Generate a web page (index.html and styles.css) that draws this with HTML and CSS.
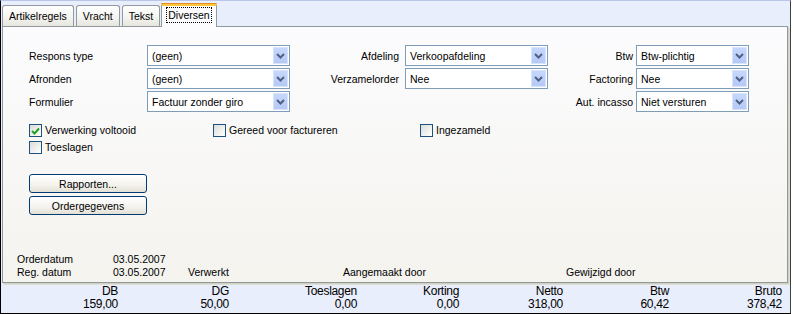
FILE: index.html
```html
<!DOCTYPE html>
<html lang="nl">
<head>
    <meta charset="UTF-8">
    <title>Order - Diversen</title>
    <link rel="stylesheet" href="styles.css">
</head>
<body>
    <div class="window">
        <div class="tabs">
            <div class="tab">Artikelregels</div>
            <div class="tab">Vracht</div>
            <div class="tab">Tekst</div>
            <div class="tab active"><span class="focus">Diversen</span></div>
        </div>

        <div class="panel">
            <!-- Keuzelijsten -->
            <div class="fields">
                <span class="lbl">Respons type</span>
                <div class="combo"><span>(geen)</span><i class="drop"><svg width="9" height="6" viewBox="0 0 9 6"><polyline points="1,1 4.5,4.5 8,1" fill="none" stroke="#4d6185" stroke-width="2"/></svg></i></div>
                <span class="lbl right">Afdeling</span>
                <div class="combo"><span>Verkoopafdeling</span><i class="drop"><svg width="9" height="6" viewBox="0 0 9 6"><polyline points="1,1 4.5,4.5 8,1" fill="none" stroke="#4d6185" stroke-width="2"/></svg></i></div>
                <span class="lbl right tight">Btw</span>
                <div class="combo"><span>Btw-plichtig</span><i class="drop"><svg width="9" height="6" viewBox="0 0 9 6"><polyline points="1,1 4.5,4.5 8,1" fill="none" stroke="#4d6185" stroke-width="2"/></svg></i></div>

                <span class="lbl">Afronden</span>
                <div class="combo"><span>(geen)</span><i class="drop"><svg width="9" height="6" viewBox="0 0 9 6"><polyline points="1,1 4.5,4.5 8,1" fill="none" stroke="#4d6185" stroke-width="2"/></svg></i></div>
                <span class="lbl right">Verzamelorder</span>
                <div class="combo"><span>Nee</span><i class="drop"><svg width="9" height="6" viewBox="0 0 9 6"><polyline points="1,1 4.5,4.5 8,1" fill="none" stroke="#4d6185" stroke-width="2"/></svg></i></div>
                <span class="lbl right tight">Factoring</span>
                <div class="combo"><span>Nee</span><i class="drop"><svg width="9" height="6" viewBox="0 0 9 6"><polyline points="1,1 4.5,4.5 8,1" fill="none" stroke="#4d6185" stroke-width="2"/></svg></i></div>

                <span class="lbl">Formulier</span>
                <div class="combo"><span>Factuur zonder giro</span><i class="drop"><svg width="9" height="6" viewBox="0 0 9 6"><polyline points="1,1 4.5,4.5 8,1" fill="none" stroke="#4d6185" stroke-width="2"/></svg></i></div>
                <span></span>
                <span></span>
                <span class="lbl right tight">Aut. incasso</span>
                <div class="combo"><span>Niet versturen</span><i class="drop"><svg width="9" height="6" viewBox="0 0 9 6"><polyline points="1,1 4.5,4.5 8,1" fill="none" stroke="#4d6185" stroke-width="2"/></svg></i></div>
            </div>

            <!-- Vinkjes -->
            <div class="checks">
                <label class="check"><span class="box checked"><svg width="9" height="8" viewBox="0 0 9 8"><polyline points="1,4 3.5,6.5 8,1.5" fill="none" stroke="#21a121" stroke-width="2"/></svg></span>Verwerking voltooid</label>
                <label class="check"><span class="box"></span>Gereed voor factureren</label>
                <label class="check"><span class="box"></span>Ingezameld</label>
                <label class="check"><span class="box"></span>Toeslagen</label>
            </div>

            <div class="buttons">
                <button class="btn">Rapporten...</button>
                <button class="btn">Ordergegevens</button>
            </div>

            <div class="info">
                <span>Orderdatum</span>
                <span>03.05.2007</span>
                <span></span>
                <span></span>
                <span></span>
                <span>Reg. datum</span>
                <span>03.05.2007</span>
                <span>Verwerkt</span>
                <span>Aangemaakt door</span>
                <span>Gewijzigd door</span>
            </div>
        </div>

        <!-- Totalen -->
        <div class="totals">
            <div class="total"><span>DB</span><span>159,00</span></div>
            <div class="total"><span>DG</span><span>50,00</span></div>
            <div class="total"><span>Toeslagen</span><span>0,00</span></div>
            <div class="total"><span>Korting</span><span>0,00</span></div>
            <div class="total"><span>Netto</span><span>318,00</span></div>
            <div class="total"><span>Btw</span><span>60,42</span></div>
            <div class="total"><span>Bruto</span><span>378,42</span></div>
        </div>
    </div>
</body>
</html>
```

FILE: styles.css
```css
:root {
    --window-bg: #e8eefb;
    --tab-border: #919b9c;
    --combo-border: #7f9db9;
    --text-color: #000000;
}

* {
    box-sizing: border-box;
    margin: 0;
    padding: 0;
}

body {
    background: #ffffff;
    font-family: 'Liberation Sans', Arial, sans-serif;
    font-size: 10.5px;
    color: var(--text-color);
}

.window {
    width: 791px;
    height: 314px;
    background: var(--window-bg);
    border-top: 1px solid #b9c6e8;
    border-left: 1px solid #000000;
    border-right: 1px solid #404040;
    border-bottom: 1px solid #000000;
    display: flex;
    flex-direction: column;
}

/* Tabbladen */
.tabs {
    height: 25px;
    display: flex;
    align-items: flex-end;
    padding-left: 1px;
}

.tab {
    height: 21px;
    padding: 0 6px;
    margin-right: 2px;
    line-height: 20px;
    border: 1px solid var(--tab-border);
    border-bottom: none;
    border-radius: 3px 3px 0 0;
    background: linear-gradient(#ffffff, #f3f3ef 60%, #e6e5dd);
}

.tab.active {
    height: 24px;
    margin-bottom: -1px;
    margin-left: -1px;
    padding: 0 4px;
    position: relative;
    z-index: 1;
    background: #fcfcfe;
    border-top: 3px solid #ffc83c;
    box-shadow: inset 0 1px 0 #ffffff;
    line-height: 19px;
}

.tab.active::before {
    content: '';
    position: absolute;
    left: -1px;
    right: -1px;
    top: -3px;
    height: 1px;
    background: #e68b2c;
    border-radius: 2px 2px 0 0;
}

.focus {
    display: inline-block;
    line-height: 14px;
    padding: 0 1px;
    border: 1px dotted #000000;
}

/* Paneel */
.panel {
    height: 257px;
    margin: 0 2px 0 1px;
    border: 1px solid var(--tab-border);
    background: linear-gradient(#fcfcfe, #f4f3ee);
    box-shadow: 1px 1px 0 #d0cfc4, 2px 2px 0 #e0ded4;
}

.fields {
    display: grid;
    grid-template-columns: 118px 143px 115px 143px 88px 113px;
    grid-auto-rows: 21px;
    row-gap: 2px;
    margin: 18px 0 0 26px;
}

.lbl {
    align-self: center;
    white-space: nowrap;
}

.lbl.right {
    text-align: right;
    padding-right: 6px;
}

.lbl.right.tight {
    padding-right: 3px;
}

.combo {
    display: flex;
    align-items: center;
    justify-content: space-between;
    padding: 0 1px 0 4px;
    border: 1px solid var(--combo-border);
    background: #ffffff;
}

.drop {
    width: 15px;
    height: 17px;
    display: flex;
    align-items: center;
    justify-content: center;
    border-radius: 1px;
    background: linear-gradient(#c8d8fc, #b4c8f6);
    box-shadow: inset 0 0 0 1px #d8e4fe;
}

/* Vinkjes */
.checks {
    display: grid;
    grid-template-columns: 184px 207px auto;
    grid-auto-rows: 17px;
    margin: 12px 0 0 26px;
}

.check {
    display: flex;
    align-items: flex-start;
    gap: 3px;
    line-height: 13px;
    white-space: nowrap;
}

.box {
    width: 13px;
    height: 13px;
    display: flex;
    align-items: center;
    justify-content: center;
    border: 1px solid #1c5180;
    background: linear-gradient(135deg, #dcdcd7, #ffffff);
}

.buttons {
    display: flex;
    flex-direction: column;
    gap: 3px;
    margin: 16px 0 0 26px;
}

.btn {
    width: 118px;
    height: 19px;
    font-family: inherit;
    font-size: 10.5px;
    color: #000000;
    border: 1px solid #003c74;
    border-radius: 3px;
    background: linear-gradient(#ffffff, #f3f2ec 60%, #e3e0d6);
}

.info {
    display: grid;
    grid-template-columns: 96px 75px 155px 223px auto;
    grid-auto-rows: 13px;
    margin: 38px 0 0 14px;
    line-height: 13px;
    white-space: nowrap;
}

/* Totalen */
.totals {
    flex: 1;
    display: grid;
    grid-template-columns: 117px 111px 128px 102px 104px 106px 113px;
    padding-top: 2px;
    font-size: 12px;
    letter-spacing: -0.3px;
    line-height: 13px;
}

.total {
    display: flex;
    flex-direction: column;
    align-items: flex-end;
}
```
